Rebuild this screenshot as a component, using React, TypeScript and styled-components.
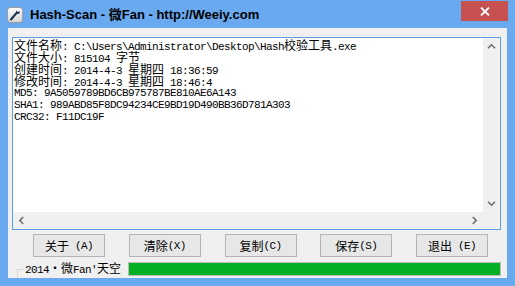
import React from 'react';
import styled, { createGlobalStyle } from 'styled-components';

const Global = createGlobalStyle`
  html, body { margin: 0; padding: 0; width: 515px; height: 286px; overflow: hidden; background: #69a9f0; }
  #root { width: 515px; height: 286px; }
`;

const Window = styled.div`
  width: 515px;
  height: 286px;
  box-sizing: border-box;
  background: #69a9f0;
  display: flex;
  flex-direction: column;
`;

const TitleBar = styled.div`
  height: 28px;
  flex: none;
  display: flex;
  align-items: flex-start;
  padding-left: 7px;
  box-sizing: border-box;
`;

const AppIcon = styled.svg`
  margin-top: 7px;
  flex: none;
`;

const Title = styled.div`
  margin-left: 7px;
  margin-top: 7px;
  font: bold 13px/16px "Liberation Sans", "Noto Sans CJK SC", sans-serif;
  color: #000;
  white-space: nowrap;
`;

const CloseButton = styled.div`
  margin-left: auto;
  margin-right: 7px;
  margin-top: 1px;
  width: 47px;
  height: 20px;
  background: #c75050;
  display: flex;
  align-items: center;
  justify-content: center;
`;

const Client = styled.div`
  margin: 0 8px 8px;
  height: 250px;
  flex: none;
  background: #f0f0f0;
  box-sizing: border-box;
  padding: 9px 6px 0 4px;
  display: flex;
  flex-direction: column;
  overflow: hidden;
`;

const TextBox = styled.div`
  height: 193px;
  flex: none;
  box-sizing: border-box;
  border: 1px solid #5b9ee6;
  background: #fff;
  display: grid;
  grid-template-columns: 1fr 17px;
  grid-template-rows: 1fr 17px;
`;

const Content = styled.div`
  padding: 1px 0 0 1px;
  overflow: hidden;
  white-space: pre;
  color: #000;
  font: 11px/12px "Liberation Mono", monospace;
  letter-spacing: -0.6px;
`;

const Line = styled.div`
  height: 12px;
  line-height: 12px;
`;

const Han = styled.span`
  display: inline-block;
  height: 12px;
  font: 12px/12px "Noto Sans CJK SC", sans-serif;
  letter-spacing: 0;
`;

const VScroll = styled.div`
  background: #f0f0f0;
  display: flex;
  flex-direction: column;
  justify-content: space-between;
`;

const HScroll = styled.div`
  background: #f0f0f0;
  display: flex;
  justify-content: space-between;
`;

const Corner = styled.div`
  background: #f0f0f0;
`;

const ArrowCell = styled.div`
  width: 17px;
  height: 17px;
  display: flex;
  align-items: center;
  justify-content: center;
  flex: none;
`;

const ButtonRow = styled.div`
  margin-top: 4px;
  height: 23px;
  flex: none;
  display: flex;
  gap: 23.75px;
  padding-left: 21px;
`;

const Button = styled.div`
  width: 72px;
  height: 23px;
  box-sizing: border-box;
  border: 1px solid #b4b4b4;
  background: #e7e7e7;
  display: flex;
  align-items: center;
  justify-content: center;
  white-space: pre;
  color: #000;
  font: 11px/12px "Liberation Mono", monospace;
  letter-spacing: -0.6px;
`;

const StatusRow = styled.div`
  margin-top: 5px;
  height: 16px;
  flex: none;
  display: flex;
  align-items: flex-start;
  padding-left: 5px;
`;

const Group = styled.fieldset`
  margin: 0;
  padding: 0 0 0 6px;
  width: 107px;
  height: 30px;
  min-width: 0;
  box-sizing: border-box;
  flex: none;
  border: none;
  border-top: 1px solid #d9d9d9;
  border-left: 1px solid #d9d9d9;
`;

const Legend = styled.legend`
  padding: 0 1px;
  white-space: pre;
  color: #000;
  font: 11px/12px "Liberation Mono", monospace;
  letter-spacing: -0.6px;
`;

const Progress = styled.div`
  flex: 1;
  margin-left: 4px;
  height: 14px;
  box-sizing: border-box;
  border: 1px solid #bcbcbc;
  background: #e6e6e6;
`;

const Fill = styled.div<{ $value: number }>`
  height: 100%;
  width: ${(p) => p.$value}%;
  background: #06b025;
`;

const CJK = /[\u3000-\u9fff\uff00-\uffef]/;

function Rich({ text }: { text: string }) {
  const runs: { t: string; han: boolean }[] = [];
  for (const ch of text) {
    const han = CJK.test(ch);
    const last = runs[runs.length - 1];
    if (last && last.han === han) last.t += ch;
    else runs.push({ t: ch, han });
  }
  return (
    <>
      {runs.map((r, i) => (r.han ? <Han key={i}>{r.t}</Han> : <React.Fragment key={i}>{r.t}</React.Fragment>))}
    </>
  );
}

const Chevron = ({ dir }: { dir: 'up' | 'down' | 'left' | 'right' }) => {
  const rot = { up: 0, right: 90, down: 180, left: 270 }[dir];
  return (
    <svg width="9" height="9" viewBox="0 0 9 9">
      <g transform={`rotate(${rot} 4.5 4.5)`}>
        <path d="M1 6.2 L4.5 2.8 L8 6.2" fill="none" stroke="#6d6d6d" strokeWidth="1.6" />
      </g>
    </svg>
  );
};

const lines = [
  '文件名称: C:\\Users\\Administrator\\Desktop\\Hash校验工具.exe',
  '文件大小: 815104 字节',
  '创建时间: 2014-4-3 星期四 18:36:59',
  '修改时间: 2014-4-3 星期四 18:46:4',
  'MD5: 9A5059789BD6CB975787BE810AE6A143',
  'SHA1: 989ABD85F8DC94234CE9BD19D490BB36D781A303',
  'CRC32: F11DC19F',
];

const buttons = ['关于 (A)', '清除(X)', '复制(C)', '保存(S)', '退出 (E)'];

export default function App() {
  return (
    <>
      <Global />
      <Window>
        <TitleBar>
          <AppIcon width="16" height="16" viewBox="0 0 16 16">
            <defs>
              <linearGradient id="ig" x1="0" y1="0" x2="0" y2="1">
                <stop offset="0" stopColor="#ffffff" />
                <stop offset="1" stopColor="#d4d4d4" />
              </linearGradient>
            </defs>
            <rect x="0.5" y="0.5" width="15" height="15" rx="3" fill="url(#ig)" stroke="#9a9a9a" />
            <path d="M4 12.5 L9.5 6" stroke="#1d2f4a" strokeWidth="2" strokeLinecap="round" />
            <path d="M9 7 L9.2 3.5 L11 5.2 L12.5 3.6 L12.6 6.8 Z" fill="#1d2f4a" />
          </AppIcon>
          <Title>Hash-Scan - 微Fan - http://Weeiy.com</Title>
          <CloseButton>
            <svg width="10" height="9" viewBox="0 0 10 9">
              <path d="M1 0.5 L9 8.5 M9 0.5 L1 8.5" stroke="#fff" strokeWidth="1.8" />
            </svg>
          </CloseButton>
        </TitleBar>
        <Client>
          <TextBox>
            <Content>
              {lines.map((l, i) => (
                <Line key={i}>
                  <Rich text={l} />
                </Line>
              ))}
            </Content>
            <VScroll>
              <ArrowCell>
                <Chevron dir="up" />
              </ArrowCell>
              <ArrowCell>
                <Chevron dir="down" />
              </ArrowCell>
            </VScroll>
            <HScroll>
              <ArrowCell>
                <Chevron dir="left" />
              </ArrowCell>
              <ArrowCell>
                <Chevron dir="right" />
              </ArrowCell>
            </HScroll>
            <Corner />
          </TextBox>
          <ButtonRow>
            {buttons.map((b) => (
              <Button key={b}>
                <Rich text={b} />
              </Button>
            ))}
          </ButtonRow>
          <StatusRow>
            <Group>
              <Legend>
                <Rich text="2014・微Fan'天空" />
              </Legend>
            </Group>
            <Progress>
              <Fill $value={100} />
            </Progress>
          </StatusRow>
        </Client>
      </Window>
    </>
  );
}
